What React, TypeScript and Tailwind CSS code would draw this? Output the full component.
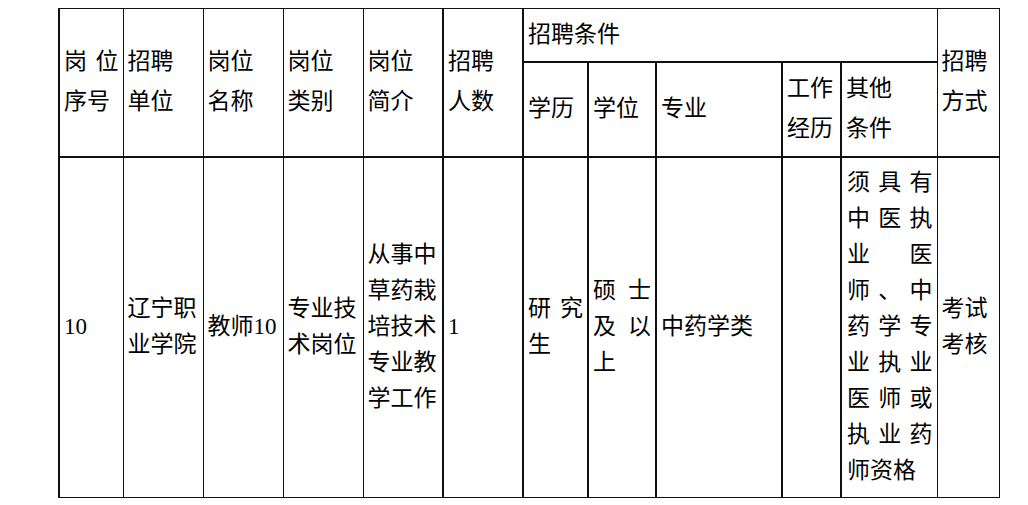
import React from 'react';

type Line = { text: string; spread?: boolean };

// a paragraph broken into its lines the way the source document breaks it
const Para: React.FC<{ lines: Line[] }> = ({ lines }) => (
    <div>
        {lines.map((l, i) =>
            l.spread ? (
                <div key={i} className="flex justify-between">
                    {Array.from(l.text).map((c, j) => (
                        <span key={j}>{c}</span>
                    ))}
                </div>
            ) : (
                <div key={i} className="whitespace-nowrap">{l.text}</div>
            )
        )}
    </div>
);

const two = (a: string, b: string): Line[] => [{ text: a }, { text: b }];

const cols = [64, 80, 80, 80, 80, 80, 65, 68, 126, 59, 96, 62];

const thin = 'border border-[#111]';
const cell = 'px-[4px] align-middle text-left font-normal';

const App: React.FC = () => {
    return (
        <div
            className="w-[1028px] h-[505px] bg-white text-black pt-[8px] pl-[58px]"
            style={{ fontFamily: '"Liberation Serif", "Noto Sans CJK SC", serif' }}
        >
            <table className="border-collapse table-fixed w-[940px] text-[23px]">
                <colgroup>
                    {cols.map((w, i) => (
                        <col key={i} style={{ width: w }} />
                    ))}
                </colgroup>
                <thead className="leading-[40px]">
                    <tr className="h-[53px]">
                        <th rowSpan={2} className={`${thin} border-l-2 ${cell}`}>
                            <Para lines={[{ text: '岗位', spread: true }, { text: '序号' }]} />
                        </th>
                        <th rowSpan={2} className={`${thin} ${cell}`}>
                            <Para lines={two('招聘', '单位')} />
                        </th>
                        <th rowSpan={2} className={`${thin} ${cell}`}>
                            <Para lines={two('岗位', '名称')} />
                        </th>
                        <th rowSpan={2} className={`${thin} ${cell}`}>
                            <Para lines={two('岗位', '类别')} />
                        </th>
                        <th rowSpan={2} className={`${thin} ${cell}`}>
                            <Para lines={two('岗位', '简介')} />
                        </th>
                        <th rowSpan={2} className={`${thin} border-l-2 border-r-2 ${cell}`}>
                            <Para lines={two('招聘', '人数')} />
                        </th>
                        <th colSpan={5} className={`${thin} border-b-2 ${cell}`}>
                            招聘条件
                        </th>
                        <th rowSpan={2} className={`${thin} ${cell}`}>
                            <Para lines={two('招聘', '方式')} />
                        </th>
                    </tr>
                    <tr className="h-[95px]">
                        <th className={`${thin} border-l-2 border-r-2 ${cell}`}>学历</th>
                        <th className={`${thin} border-r-2 ${cell}`}>学位</th>
                        <th className={`${thin} border-r-2 ${cell}`}>专业</th>
                        <th className={`${thin} border-r-2 ${cell}`}>
                            <Para lines={two('工作', '经历')} />
                        </th>
                        <th className={`${thin} ${cell}`}>
                            <Para lines={two('其他', '条件')} />
                        </th>
                    </tr>
                </thead>
                <tbody className="leading-[36px]">
                    <tr className="h-[341px] border-t-2 border-[#111]">
                        <td className={`${thin} border-l-2 ${cell}`}>10</td>
                        <td className={`${thin} ${cell}`}>
                            <Para lines={two('辽宁职', '业学院')} />
                        </td>
                        <td className={`${thin} ${cell}`}>教师10</td>
                        <td className={`${thin} ${cell}`}>
                            <Para lines={two('专业技', '术岗位')} />
                        </td>
                        <td className={`${thin} ${cell}`}>
                            <Para
                                lines={['从事中', '草药栽', '培技术', '专业教', '学工作'].map((t) => ({ text: t }))}
                            />
                        </td>
                        <td className={`${thin} border-l-2 border-r-2 ${cell}`}>1</td>
                        <td className={`${thin} border-r-2 ${cell}`}>
                            <Para lines={[{ text: '研究', spread: true }, { text: '生' }]} />
                        </td>
                        <td className={`${thin} border-r-2 ${cell}`}>
                            <Para
                                lines={[
                                    { text: '硕士', spread: true },
                                    { text: '及以', spread: true },
                                    { text: '上' },
                                ]}
                            />
                        </td>
                        <td className={`${thin} border-r-2 ${cell}`}>中药学类</td>
                        <td className={`${thin} border-r-2 ${cell}`}></td>
                        <td className={`${thin} ${cell} pr-[4px] pl-[5px]`}>
                            <Para
                                lines={[
                                    { text: '须具有', spread: true },
                                    { text: '中医执', spread: true },
                                    { text: '业医', spread: true },
                                    { text: '师、中', spread: true },
                                    { text: '药学专', spread: true },
                                    { text: '业执业', spread: true },
                                    { text: '医师或', spread: true },
                                    { text: '执业药', spread: true },
                                    { text: '师资格' },
                                ]}
                            />
                        </td>
                        <td className={`${thin} ${cell}`}>
                            <Para lines={two('考试', '考核')} />
                        </td>
                    </tr>
                </tbody>
            </table>
        </div>
    );
};

export default App;
